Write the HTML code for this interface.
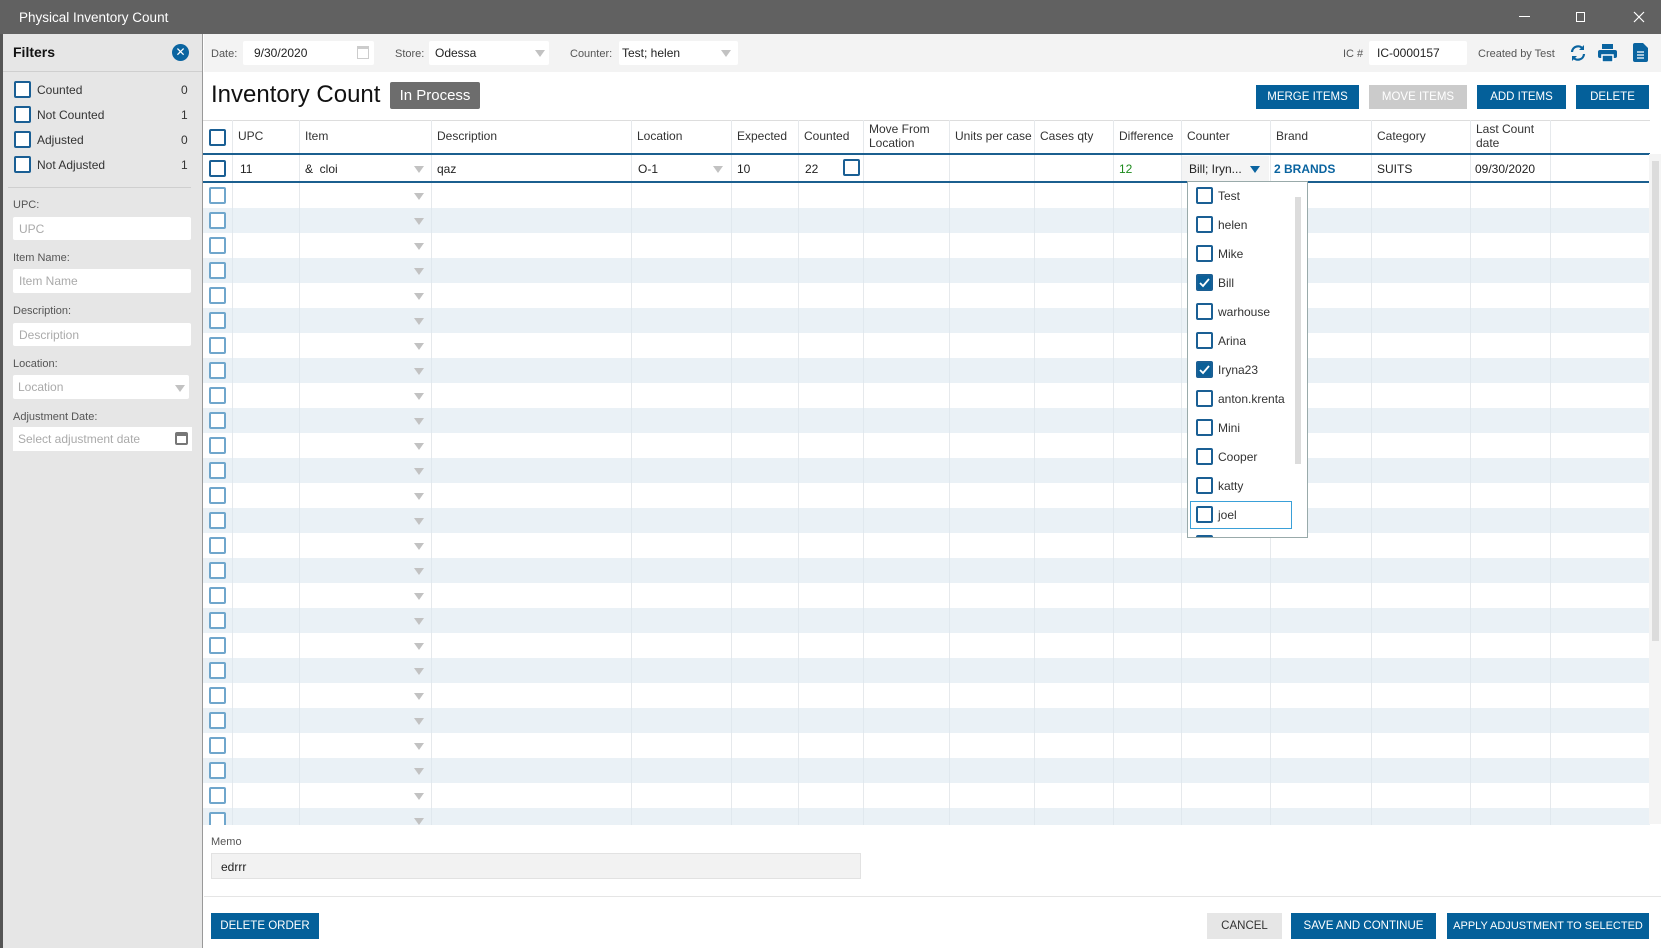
<!DOCTYPE html>
<html><head><meta charset="utf-8">
<style>
*{box-sizing:border-box;margin:0;padding:0}
body{width:1661px;height:948px;overflow:hidden;font-family:"Liberation Sans",sans-serif;font-size:12px;color:#222;background:#fff;position:relative}
.a{position:absolute}
.cb{position:absolute;width:17px;height:17px;border:2px solid #1a5f94;border-radius:2px;background:#fff}
.cbl{border-color:#6fa6cc}
.inp{position:absolute;background:#fff;border-radius:2px}
.btn{position:absolute;background:#04609a;color:#fff;font-size:11.5px;display:flex;align-items:center;justify-content:center;white-space:nowrap}
.tri{position:absolute;width:0;height:0;border-left:5px solid transparent;border-right:5px solid transparent;border-top:7px solid #c2c2c2}
.lbl{position:absolute;font-size:11px;color:#555}
.ph{color:#aaa;font-size:12px}
.hd{position:absolute;font-size:12px;color:#333;line-height:14px}
</style></head><body>
<div class="a" style="left:0;top:0;width:1661px;height:34px;background:#616161"></div>
<div class="a" style="left:19px;top:10px;color:#fff;font-size:13.5px">Physical Inventory Count</div>
<div class="a" style="left:1519px;top:16px;width:11px;height:1px;background:#fff"></div>
<div class="a" style="left:1576px;top:12px;width:9px;height:10px;border:1px solid #fff"></div>
<svg class="a" style="left:1633px;top:11px" width="12" height="12"><path d="M1 1l10 10M11 1L1 11" stroke="#fff" stroke-width="1.2"/></svg>
<div class="a" style="left:0;top:34px;width:203px;height:914px;background:#e6e6e6;border-left:3px solid #555;border-right:1px solid #999"></div>
<div class="a" style="left:13px;top:44px;font-size:14px;font-weight:bold;color:#111">Filters</div>
<div class="a" style="left:172px;top:44px;width:17px;height:17px;border-radius:50%;background:#0a64a0;color:#fff;font-size:12px;text-align:center;line-height:17px">✕</div>
<div class="a" style="left:3px;top:71px;width:199px;height:1px;background:#cfcfcf"></div>
<div class="cb" style="left:14px;top:81px"></div><div class="a" style="left:37px;top:83px;color:#333">Counted</div><div class="a" style="left:181px;top:83px;color:#333">0</div>
<div class="cb" style="left:14px;top:106px"></div><div class="a" style="left:37px;top:108px;color:#333">Not Counted</div><div class="a" style="left:181px;top:108px;color:#333">1</div>
<div class="cb" style="left:14px;top:131px"></div><div class="a" style="left:37px;top:133px;color:#333">Adjusted</div><div class="a" style="left:181px;top:133px;color:#333">0</div>
<div class="cb" style="left:14px;top:156px"></div><div class="a" style="left:37px;top:158px;color:#333">Not Adjusted</div><div class="a" style="left:181px;top:158px;color:#333">1</div>
<div class="a" style="left:8px;top:187px;width:183px;height:1px;background:#cfcfcf"></div>
<div class="lbl" style="left:13px;top:199px">UPC:</div>
<div class="inp" style="left:13px;top:217px;width:178px;height:23px;padding:5px 6px"><span class="ph">UPC</span></div>
<div class="lbl" style="left:13px;top:252px">Item Name:</div>
<div class="inp" style="left:13px;top:269px;width:178px;height:24px;padding:5px 6px"><span class="ph">Item Name</span></div>
<div class="lbl" style="left:13px;top:305px">Description:</div>
<div class="inp" style="left:13px;top:323px;width:178px;height:23px;padding:5px 6px"><span class="ph">Description</span></div>
<div class="lbl" style="left:13px;top:358px">Location:</div>
<div class="inp" style="left:13px;top:375px;width:176px;height:24px;padding:5px 5px"><span class="ph">Location</span></div>
<div class="tri" style="left:175px;top:385px"></div>
<div class="lbl" style="left:13px;top:411px">Adjustment Date:</div>
<div class="inp" style="left:13px;top:427px;width:179px;height:24px;padding:5px 5px;border-radius:0"><span class="ph">Select adjustment date</span></div>
<div class="a" style="left:175px;top:432px;width:13px;height:13px;border:2px solid #777;border-top-width:4px;border-radius:2px"></div>
<div class="a" style="left:204px;top:34px;width:1457px;height:38px;background:#f3f3f3"></div>
<div class="lbl" style="left:211px;top:48px">Date:</div>
<div class="inp" style="left:243px;top:41px;width:131px;height:24px;padding:5px 11px">9/30/2020</div>
<div class="a" style="left:357px;top:46px;width:12px;height:13px;border:1px solid #ccc;border-top-width:3px"></div>
<div class="lbl" style="left:395px;top:48px">Store:</div>
<div class="inp" style="left:429px;top:41px;width:120px;height:24px;padding:5px 6px">Odessa</div>
<div class="tri" style="left:535px;top:50px"></div>
<div class="lbl" style="left:570px;top:48px">Counter:</div>
<div class="inp" style="left:619px;top:41px;width:119px;height:24px;padding:5px 3px">Test; helen</div>
<div class="tri" style="left:721px;top:50px"></div>
<div class="lbl" style="left:1343px;top:48px">IC #</div>
<div class="inp" style="left:1369px;top:41px;width:98px;height:24px;padding:5px 8px">IC-0000157</div>
<div class="lbl" style="left:1478px;top:48px">Created by Test</div>
<svg class="a" style="left:1569px;top:44px" width="18" height="18" viewBox="0 0 18 18"><path d="M3 8a6 6 0 0 1 11-3M15 10a6 6 0 0 1-11 3" fill="none" stroke="#0a64a0" stroke-width="2.2"/><path d="M15 1v5h-5zM3 17v-5h5z" fill="#0a64a0"/></svg>
<svg class="a" style="left:1598px;top:44px" width="19" height="18" viewBox="0 0 19 18"><rect x="4" y="0" width="11" height="5" fill="#0a64a0"/><rect x="0" y="6" width="19" height="8" rx="2" fill="#0a64a0"/><rect x="4" y="11" width="11" height="7" fill="#0a64a0" stroke="#fff" stroke-width="1.5"/></svg>
<svg class="a" style="left:1633px;top:43px" width="15" height="19" viewBox="0 0 15 19"><path d="M0 2a2 2 0 0 1 2-2h8l5 5v12a2 2 0 0 1-2 2H2a2 2 0 0 1-2-2z" fill="#0a64a0"/><path d="M4 9h7M4 12h7M4 15h7" stroke="#fff" stroke-width="1.3"/></svg>
<div class="a" style="left:211px;top:81px;font-size:24px;color:#111">Inventory Count</div>
<div class="a" style="left:390px;top:82px;width:90px;height:27px;background:#6d6d6d;border-radius:2px;color:#fff;font-size:15px;text-align:center;line-height:27px">In Process</div>
<div class="btn" style="left:1256px;top:85px;width:103px;height:24px">MERGE ITEMS</div>
<div class="btn" style="left:1369px;top:85px;width:98px;height:24px;background:#cbcbcb">MOVE ITEMS</div>
<div class="btn" style="left:1477px;top:85px;width:89px;height:24px">ADD ITEMS</div>
<div class="btn" style="left:1576px;top:85px;width:73px;height:24px">DELETE</div>
<div id="tbl" class="a" style="left:203px;top:120px;width:1447px;height:705px;overflow:hidden"></div>
<div class="a" style="left:1649px;top:154px;width:12px;height:670px;background:#f4f4f4"></div>
<div class="a" style="left:1652px;top:161px;width:7px;height:480px;background:#dcdcdc"></div>
<div class="a" style="left:1187px;top:181px;width:121px;height:357px;background:#fff;border:1px solid #9aa;overflow:hidden" id="dd"></div>
<div class="lbl" style="left:211px;top:836px">Memo</div>
<div class="a" style="left:211px;top:853px;width:650px;height:26px;background:#f2f2f2;border:1px solid #e2e2e2;padding:6px 9px">edrrr</div>
<div class="a" style="left:204px;top:896px;width:1457px;height:1px;background:#e5e5e5"></div>
<div class="btn" style="left:211px;top:913px;width:108px;height:26px">DELETE ORDER</div>
<div class="btn" style="left:1207px;top:913px;width:75px;height:26px;background:#e6e6e6;color:#333">CANCEL</div>
<div class="btn" style="left:1291px;top:913px;width:145px;height:26px">SAVE AND CONTINUE</div>
<div class="btn" style="left:1447px;top:913px;width:202px;height:26px;font-size:11px">APPLY ADJUSTMENT TO SELECTED</div>
<script>
var T=document.getElementById('tbl'),h='';
var cols=[203,232,299,431,631,731,798,863,949,1034,1113,1181,1270,1371,1470,1550,1649];
h+='<div class="a" style="left:0;top:0;width:1447px;height:1px;background:#ddd"></div>';
for(var i=1;i<cols.length-1;i++){h+='<div class="a" style="left:'+(cols[i]-203)+'px;top:0;width:1px;height:705px;background:#e6e9ec"></div>';}
var hd=['UPC','Item','Description','Location','Expected','Counted','Move From<br>Location','Units per case','Cases qty','Difference','Counter','Brand','Category','Last Count<br>date'];
for(var i=0;i<hd.length;i++){var two=hd[i].indexOf('<br>')>0;h+='<div class="hd" style="left:'+(cols[i+1]-203+6)+'px;top:'+(two?2:9)+'px">'+hd[i]+'</div>';}
h+='<div class="cb" style="left:6px;top:9px"></div>';
h+='<div class="a" style="left:0;top:33px;width:1447px;height:2px;background:#1b5f8f"></div>';
h+='<div class="a" style="left:0;top:61px;width:1447px;height:2px;background:#1b5f8f"></div>';
var y=35;
h+='<div class="cb" style="left:6px;top:'+(y+5)+'px"></div>';
function t(x,s,st){h+='<div class="a" style="left:'+(x-203)+'px;top:'+(y+7)+'px;'+(st||'')+'">'+s+'</div>';}
t(240,'11');t(305,'&amp;&nbsp; cloi');t(437,'qaz');t(638,'O-1');t(737,'10');t(805,'22');t(1119,'12','color:#1c8a1c');
t(1274,'2 BRANDS','color:#0a64a0;font-weight:bold');t(1377,'SUITS');t(1475,'09/30/2020');
h+='<div class="a" style="left:'+(1182-203)+'px;top:'+(y+1)+'px;width:87px;height:25px;background:#f4f4f4"></div>';
t(1189,'Bill; Iryn...');
h+='<div class="a" style="left:'+(1250-203)+'px;top:'+(y+11)+'px;border-left:5px solid transparent;border-right:5px solid transparent;border-top:7px solid #0a64a0"></div>';
h+='<div class="tri" style="left:'+(414-203)+'px;top:'+(y+11)+'px"></div><div class="tri" style="left:'+(713-203)+'px;top:'+(y+11)+'px"></div>';
h+='<div class="cb" style="left:'+(843-203)+'px;top:'+(y+4)+'px"></div>';
for(var k=0;k<27;k++){var yy=63+k*25;
 if(k%2==1)h+='<div class="a" style="left:0;top:'+yy+'px;width:1447px;height:25px;background:rgba(220,232,240,.6)"></div>';
 h+='<div class="cb cbl" style="left:6px;top:'+(yy+4)+'px"></div><div class="tri" style="left:'+(414-203)+'px;top:'+(yy+10)+'px"></div>';}
T.innerHTML=h;
var D=document.getElementById('dd'),n=['Test','helen','Mike','Bill','warhouse','Arina','Iryna23','anton.krenta','Mini','Cooper','katty','joel',''],g='';
for(var i=0;i<n.length;i++){var yy=1+i*29,c=(i==3||i==6);
 if(i==11)g+='<div class="a" style="left:2px;top:'+(yy-1)+'px;width:102px;height:28px;border:1px solid #3aa0d8"></div>';
 g+='<div class="cb" style="left:8px;top:'+(yy+4)+'px;'+(c?'background:#0a5f98':'')+'">'+(c?'<svg width="13" height="13" style="position:absolute;left:0;top:0"><path d="M2 7l3 3 6-7" stroke="#fff" stroke-width="1.8" fill="none"/></svg>':'')+'</div>';
 g+='<div class="a" style="left:30px;top:'+(yy+6)+'px;color:#333">'+n[i]+'</div>';}
g+='<div class="a" style="left:107px;top:15px;width:6px;height:267px;background:#dcdcdc"></div>';
D.innerHTML=g;
</script>
</body></html>
